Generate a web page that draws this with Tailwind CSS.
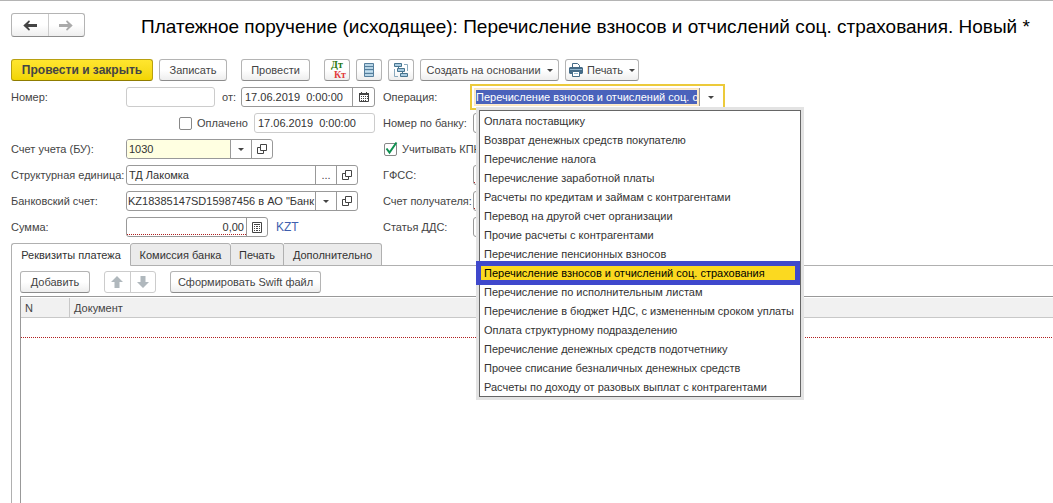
<!DOCTYPE html>
<html lang="ru">
<head>
<meta charset="utf-8">
<meta name="viewport" content="width=device-width, initial-scale=1">
<title>Платежное поручение (исходящее)</title>
<script src="https://cdn.jsdelivr.net/npm/@tailwindcss/browser@4"></script>
</head>
<body class="flex min-h-screen flex-col overflow-x-hidden border-t border-[#b4b4b4] bg-white pl-[11px] font-['Liberation_Sans',Arial,sans-serif] text-[11px] leading-4 text-[#444]">

<svg class="hidden" aria-hidden="true">
  <symbol id="open" viewBox="0 0 10 10"><path d="M3.5.5h6v6h-6zM3.5 3.5h-3v6h6v-3" fill="none" stroke="#444"/></symbol>
  <symbol id="caret" viewBox="0 0 6 3"><path d="M0 0h6L3 3z" fill="#444"/></symbol>
  <symbol id="calendar" viewBox="0 0 10 10"><path d="M.5 1.5h9v8h-9z" fill="none" stroke="#444"/><path d="M0 1h10v2H0zM2 0h1v1H2zM7 0h1v1H7zM2 4h1v1H2zM4 4h1v1H4zM6 4h1v1H6zM8 4h1v1H8zM2 6h1v1H2zM4 6h1v1H4zM6 6h1v1H6zM8 6h1v1H8zM2 8h1v1H2zM4 8h1v1H4zM6 8h1v1H6z" fill="#444"/></symbol>
  <symbol id="calc" viewBox="0 0 10 11"><path d="M.5.5h9v10h-9z" fill="none" stroke="#444"/><path d="M2 2h6v1H2zM2 4h1v1H2zM4 4h2v1H4zM7 4h1v1H7zM2 6h1v1H2zM4 6h2v1H4zM7 6h1v1H7zM2 8h1v1H2zM4 8h2v1H4zM7 8h1v1H7z" fill="#444"/></symbol>
</svg>

<header class="mt-3 flex h-6 shrink-0 items-center">
  <div class="flex h-6 w-[74px] shrink-0 rounded-[3px] border border-[#b4b4b4] border-b-[#8c8c8c] bg-linear-to-b from-white from-50% to-[#eee]">
    <button class="flex flex-1 items-center justify-center border-r border-[#ccc]" aria-label="Назад"><svg class="h-[11px] w-[14px]" viewBox="0 0 14 11"><path d="M14 4v3H5l2 2.500L6 10.800.3 5.500 6 .2l1 1.300L5 4z" fill="#444"/></svg></button>
    <button class="flex flex-1 items-center justify-center" aria-label="Вперед"><svg class="h-[11px] w-[14px]" viewBox="0 0 14 11"><path d="M0 4v3h9L7 9.500l1 1.300 5.700-5.300L8 .2 7 1.500 9 4z" fill="#aaa"/></svg></button>
  </div>
  <h1 class="ml-[56px] whitespace-nowrap pt-1 text-[19px] leading-6 text-black">Платежное поручение (исходящее): Перечисление взносов и отчислений соц. страхования. Новый *</h1>
</header>

<div class="mt-[22px] flex h-[22px] shrink-0 items-stretch whitespace-nowrap">
  <button class="w-[142px] rounded-[3px] border border-[#b8a010] border-b-[#8f7c00] bg-linear-to-b from-[#ffe62e] to-[#f2d500] text-xs font-bold">Провести и закрыть</button>
  <button class="ml-1.5 w-[68px] rounded-[3px] border border-[#b4b4b4] border-b-[#8c8c8c] bg-linear-to-b from-white from-50% to-[#eee]">Записать</button>
  <button class="ml-[14px] w-[69px] rounded-[3px] border border-[#b4b4b4] border-b-[#8c8c8c] bg-linear-to-b from-white from-50% to-[#eee]">Провести</button>
  <button class="ml-[14px] flex w-[26px] flex-col rounded-[3px] border border-[#b4b4b4] border-b-[#8c8c8c] bg-linear-to-b from-white from-50% to-[#eee] px-[3px] font-['Liberation_Serif',serif] text-[10px] leading-[10px] font-bold" aria-label="Дебет и кредит"><span class="text-[#27780f]">Дт</span><span class="self-end text-[#e23b3b]">Кт</span></button>
  <button class="ml-1.5 flex w-[26px] items-center justify-center rounded-[3px] border border-[#b4b4b4] border-b-[#8c8c8c] bg-linear-to-b from-white from-50% to-[#eee]" aria-label="Журнал"><svg class="h-[14px] w-[10px]" viewBox="0 0 10 14"><path d="M.5.5h9v13h-9z" fill="#a9cbe0" stroke="#567f9d"/><path d="M1 3.500h8M1 6.500h8M1 10.500h8" stroke="#567f9d"/><path d="M1 2h8M1 5h8M1 8.500h8M1 12h8" stroke="#c6dfed"/></svg></button>
  <button class="ml-1.5 flex w-[26px] items-center justify-center rounded-[3px] border border-[#b4b4b4] border-b-[#8c8c8c] bg-linear-to-b from-white from-50% to-[#eee]" aria-label="Структура"><svg class="h-[15px] w-4" viewBox="0 0 16 15"><path d="M1.500.5h7v3h-7zM4.500 5.500h7v3h-7zM7.500 10.500h7v3h-7z" fill="#a9cbe0" stroke="#47748f"/><path d="M11 1.500h3.500V8M1.500 6v7.500H5" fill="none" stroke="#8aa9bd"/><path d="M5.500 3.500v2M9.500 8.500v2" stroke="#47748f"/></svg></button>
  <button class="ml-1.5 flex w-[139px] items-center justify-center gap-1.5 rounded-[3px] border border-[#b4b4b4] border-b-[#8c8c8c] bg-linear-to-b from-white from-50% to-[#eee]">Создать на основании<svg class="h-[3px] w-1.5"><use href="#caret"/></svg></button>
  <button class="ml-1.5 flex w-[74px] items-center justify-center gap-1 rounded-[3px] border border-[#b4b4b4] border-b-[#8c8c8c] bg-linear-to-b from-white from-50% to-[#eee]"><svg class="h-[14px] w-[14px]" viewBox="0 0 14 14"><path d="M3.500 5V.5h5l2 2V5" fill="#fff" stroke="#456b87"/><path d="M1 4h12l1 1v5l-1 1H1l-1-1V5z" fill="#456b87"/><path d="M1 6.500h12" stroke="#91b6cf"/><path d="M3.500 8.500h7v5h-7z" fill="#fff" stroke="#456b87"/><path d="M5 10.500h4" stroke="#91b6cf"/></svg>Печать<svg class="ml-0.5 h-[3px] w-1.5"><use href="#caret"/></svg></button>
</div>

<form class="mt-[3px] flex">
  <div class="w-[372px] shrink-0">
    <div class="flex h-[26px] items-center">
      <label for="num" class="w-[115px]">Номер:</label>
      <input id="num" class="h-5 w-[89px] rounded-[3px] border border-[#ccc] px-0.5">
      <label for="date" class="ml-[7px] w-[19px]">от:</label>
      <div class="flex h-5 w-[134px] rounded-[3px] border border-[#999]">
        <input id="date" value="17.06.2019  0:00:00" class="min-w-0 flex-1 px-[3px] text-[#333]">
        <button type="button" class="flex w-[22px] items-center justify-center border-l border-[#999]" aria-label="Календарь"><svg class="size-2.5"><use href="#calendar"/></svg></button>
      </div>
    </div>
    <div class="flex h-[26px] items-center pl-[168px]">
      <input id="paid" type="checkbox" class="size-[13px] appearance-none rounded-[2px] border border-[#888]">
      <label for="paid" class="ml-[5px] w-[57px]">Оплачено</label>
      <input aria-label="Дата оплаты" value="17.06.2019  0:00:00" class="h-5 w-[121px] rounded-[3px] border border-[#ccc] px-[3px] text-[#333]">
    </div>
    <div class="flex h-[26px] items-center">
      <label for="acc" class="w-[115px]">Счет учета (БУ):</label>
      <div class="flex h-5 w-[147px] overflow-hidden rounded-[3px] border border-[#999]">
        <input id="acc" value="1030" class="min-w-0 flex-1 bg-[#ffffe1] px-0.5 text-[#333]">
        <button type="button" class="flex w-[21px] items-center justify-center border-l border-[#999]" aria-label="Выбрать"><svg class="h-[3px] w-1.5"><use href="#caret"/></svg></button>
        <button type="button" class="flex w-[21px] items-center justify-center border-l border-[#999]" aria-label="Открыть"><svg class="size-2.5"><use href="#open"/></svg></button>
      </div>
    </div>
    <div class="flex h-[26px] items-center">
      <label for="unit" class="w-[115px]">Структурная единица:</label>
      <div class="flex h-5 w-[232px] rounded-[3px] border border-[#999]">
        <input id="unit" value="ТД Лакомка" class="min-w-0 flex-1 px-0.5 text-[#333]">
        <button type="button" class="w-[21px] border-l border-[#999]" aria-label="Выбрать">...</button>
        <button type="button" class="flex w-[21px] items-center justify-center border-l border-[#999]" aria-label="Открыть"><svg class="size-2.5"><use href="#open"/></svg></button>
      </div>
    </div>
    <div class="flex h-[26px] items-center">
      <label for="bank" class="w-[115px]">Банковский счет:</label>
      <div class="flex h-5 w-[232px] rounded-[3px] border border-[#999]">
        <input id="bank" value="KZ18385147SD15987456 в АО &quot;Банк" class="min-w-0 flex-1 pl-px text-[#333]">
        <button type="button" class="flex w-[21px] items-center justify-center border-l border-[#999]" aria-label="Выбрать"><svg class="h-[3px] w-1.5"><use href="#caret"/></svg></button>
        <button type="button" class="flex w-[21px] items-center justify-center border-l border-[#999]" aria-label="Открыть"><svg class="size-2.5"><use href="#open"/></svg></button>
      </div>
    </div>
    <div class="flex h-[26px] items-center">
      <label for="sum" class="w-[115px]">Сумма:</label>
      <div class="flex h-5 w-[142px] rounded-[3px] border border-[#999]">
        <input id="sum" value="0,00" class="mb-px min-w-0 flex-1 bg-[repeating-linear-gradient(90deg,#b02020_0_1px,transparent_1px_2px)] bg-[length:100%_1px] bg-bottom bg-no-repeat pr-0.5 text-right text-[#333]">
        <button type="button" class="flex w-[21px] items-center justify-center border-l border-[#999]" aria-label="Калькулятор"><svg class="h-[11px] w-2.5"><use href="#calc"/></svg></button>
      </div>
      <a href="#" class="ml-2 text-xs text-[#3f5fae]">KZT</a>
    </div>
  </div>

  <div class="min-w-0 flex-1">
    <div class="flex h-[26px] items-center">
      <label for="op" class="w-[87px] shrink-0">Операция:</label>
      <div class="relative flex h-[26px] w-[255px] border-2 border-[#ecca3a] p-0.5">
        <div class="flex min-w-0 flex-1 items-center border border-[#fbe6c0] bg-[#fdeccb] px-px">
          <input id="op" role="combobox" aria-expanded="true" aria-controls="ops" value="Перечисление взносов и отчислений соц. страхования" class="h-[14px] w-full bg-[#4a62bb] text-white">
        </div>
        <button type="button" class="flex w-[22px] items-center justify-center border-l border-[#999]" aria-label="Открыть список"><svg class="h-[3px] w-1.5"><use href="#caret"/></svg></button>

        <ul id="ops" role="listbox" class="absolute top-6 left-[7px] z-10 w-[322px] border border-[#666] bg-white text-[#333] shadow-[0_0_0_3px_#e3e3e3] *:h-[19px] *:pl-1 *:leading-5 *:whitespace-nowrap">
          <li role="option">Оплата поставщику</li>
          <li role="option">Возврат денежных средств покупателю</li>
          <li role="option">Перечисление налога</li>
          <li role="option">Перечисление заработной платы</li>
          <li role="option">Расчеты по кредитам и займам с контрагентами</li>
          <li role="option">Перевод на другой счет организации</li>
          <li role="option">Прочие расчеты с контрагентами</li>
          <li role="option">Перечисление пенсионных взносов</li>
          <li role="option" aria-selected="true" class="relative text-black"><span class="absolute -top-0.5 right-0 -bottom-[3px] -left-1 border-5 border-[#3f48cc] bg-[#fbd920]"></span><span class="relative">Перечисление взносов и отчислений соц. страхования</span></li>
          <li role="option">Перечисление по исполнительным листам</li>
          <li role="option">Перечисление в бюджет НДС, с измененным сроком уплаты</li>
          <li role="option">Оплата структурному подразделению</li>
          <li role="option">Перечисление денежных средств подотчетнику</li>
          <li role="option">Прочее списание безналичных денежных средств</li>
          <li role="option">Расчеты по доходу от разовых выплат с контрагентами</li>
        </ul>
      </div>
    </div>
    <div class="flex h-[26px] items-center">
      <label for="bnum" class="w-[90px]">Номер по банку:</label>
      <input id="bnum" class="h-5 w-[249px] rounded-[3px] border border-[#999]">
    </div>
    <div class="flex h-[26px] items-center pl-px">
      <span class="relative flex"><input id="kpn" type="checkbox" checked class="size-[13px] appearance-none rounded-[2px] border border-[#888]"><svg class="pointer-events-none absolute -top-0.5 left-0 h-[14px] w-[14px]" viewBox="0 0 14 14"><path d="M2.500 7.500l3 4L12.500 1.500" fill="none" stroke="#0f9050" stroke-width="2"/></svg></span>
      <label for="kpn" class="ml-[5px]">Учитывать КПН</label>
    </div>
    <div class="flex h-[26px] items-center">
      <label for="gfss" class="w-[90px]">ГФСС:</label>
      <div class="flex h-5 w-[249px] rounded-[3px] border border-[#999]"><input id="gfss" class="mb-px w-full bg-[repeating-linear-gradient(90deg,#b02020_0_1px,transparent_1px_2px)] bg-[length:100%_1px] bg-bottom bg-no-repeat"></div>
    </div>
    <div class="flex h-[26px] items-center">
      <label for="rcpt" class="w-[90px]">Счет получателя:</label>
      <div class="flex h-5 w-[249px] rounded-[3px] border border-[#999]"><input id="rcpt" class="mb-px w-full bg-[repeating-linear-gradient(90deg,#b02020_0_1px,transparent_1px_2px)] bg-[length:100%_1px] bg-bottom bg-no-repeat"></div>
    </div>
    <div class="flex h-[26px] items-center">
      <label for="dds" class="w-[90px]">Статья ДДС:</label>
      <input id="dds" class="h-5 w-[249px] rounded-[3px] border border-[#999]">
    </div>
  </div>
</form>

<div role="tablist" class="mt-[3px] flex h-[23px] shrink-0 text-[#333]">
  <button role="tab" aria-selected="true" class="w-[119px] rounded-tl-[3px] border-t border-l border-[#b0b0b0] bg-white">Реквизиты платежа</button>
  <button role="tab" class="w-[101px] rounded-t-[3px] border border-[#b0b0b0] bg-[#ebebeb]">Комиссия банка</button>
  <button role="tab" class="w-[53px] rounded-tr-[3px] border border-l-0 border-[#b0b0b0] bg-[#ebebeb]">Печать</button>
  <button role="tab" class="w-[98px] rounded-tr-[3px] border border-l-0 border-[#b0b0b0] bg-[#ebebeb]">Дополнительно</button>
  <div class="flex-1 border-b border-[#b0b0b0]"></div>
</div>

<main class="flex flex-1 flex-col border-l border-[#b0b0b0] pt-[5px] pl-2">
  <div class="flex h-[22px]">
    <button class="w-[70px] rounded-[3px] border border-[#b4b4b4] border-b-[#8c8c8c] bg-linear-to-b from-white from-50% to-[#eee]">Добавить</button>
    <div class="ml-[14px] flex w-[52px] rounded-[3px] border border-[#ccc]">
      <button class="flex flex-1 items-center justify-center border-r border-[#ccc]" aria-label="Переместить вверх"><svg class="h-3 w-3" viewBox="0 0 12 12"><path d="M6 0l6 6H8.500v6h-5V6H0z" fill="#b0b8bd"/></svg></button>
      <button class="flex flex-1 items-center justify-center" aria-label="Переместить вниз"><svg class="h-3 w-3" viewBox="0 0 12 12"><path d="M6 12l6-6H8.500V0h-5v6H0z" fill="#b0b8bd"/></svg></button>
    </div>
    <button class="ml-[14px] w-[151px] rounded-[3px] border border-[#b4b4b4] border-b-[#8c8c8c] bg-linear-to-b from-white from-50% to-[#eee]">Сформировать Swift файл</button>
  </div>
  <div class="mt-[3px] flex-1 border-t border-l border-[#999] pt-px">
    <table class="w-full border-separate border-spacing-0 text-left">
      <thead><tr class="h-5 bg-[#f1f1f1]"><th class="w-[49px] border-r border-b border-[#c8c8c8] p-0 pl-1 font-normal">N</th><th class="border-b border-[#c8c8c8] p-0 pl-1 font-normal">Документ</th></tr></thead>
      <tbody><tr class="h-5"><td colspan="2" class="bg-[repeating-linear-gradient(90deg,#b02020_0_1px,transparent_1px_2px)] bg-[length:100%_1px] bg-bottom bg-no-repeat p-0"></td></tr></tbody>
    </table>
  </div>
</main>
</body>
</html>
